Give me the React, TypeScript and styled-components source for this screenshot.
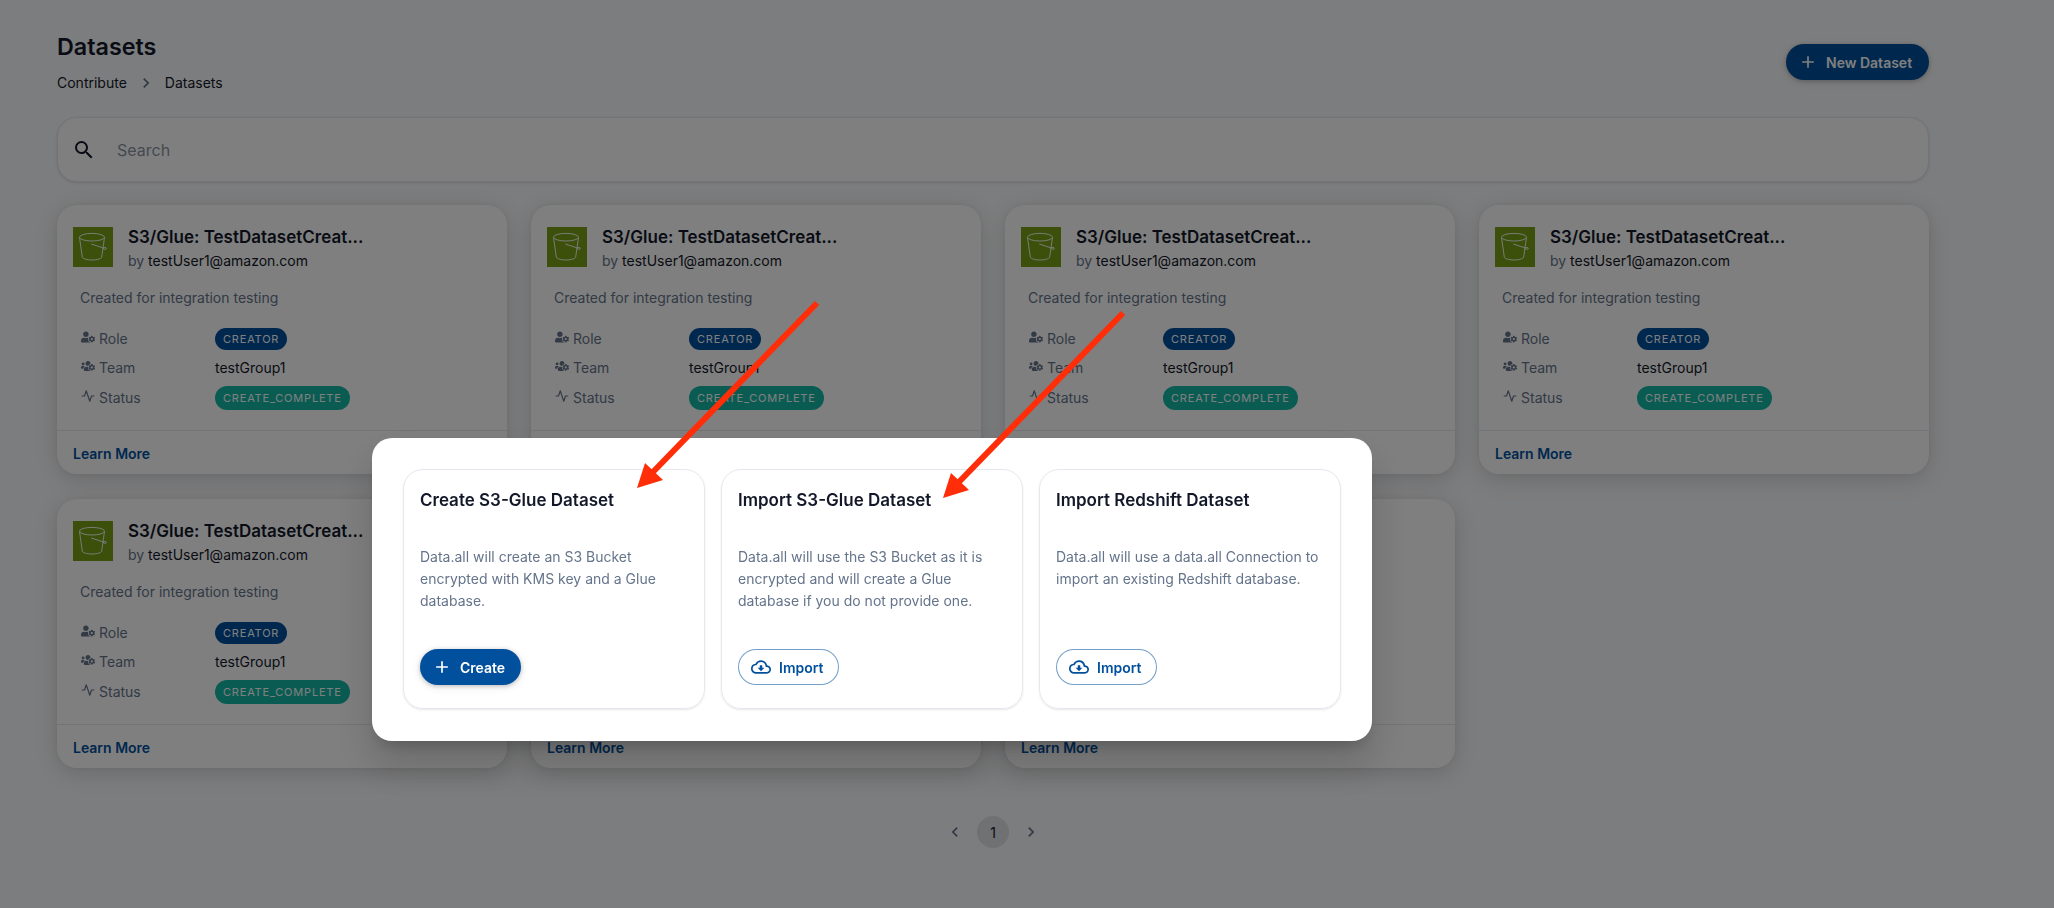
import * as React from "react";
import styled, { createGlobalStyle } from "styled-components";
import { FaUserCog, FaUsersCog } from "react-icons/fa";
import { FiActivity } from "react-icons/fi";
import {
  MdAdd,
  MdChevronLeft,
  MdChevronRight,
  MdOutlineCloudDownload,
  MdSearch,
} from "react-icons/md";

const GlobalStyle = createGlobalStyle`
  html, body {
    margin: 0;
    padding: 0;
    height: 100%;
    overflow: hidden;
    background: #f9fafc;
    color: #121828;
    font-family: Inter, "Noto Sans", sans-serif;
  }
  * {
    box-sizing: border-box;
  }
`;

const Page = styled.main`
  width: 1929px;
  padding: 30px 0 0 57px;
`;

const HeaderRow = styled.header`
  display: flex;
  justify-content: space-between;
  align-items: flex-start;
`;

const PageTitle = styled.h1`
  margin: 0;
  font-size: 23.3px;
  line-height: 33px;
  font-weight: 600;
`;

const Breadcrumbs = styled.nav`
  display: flex;
  align-items: center;
  gap: 9px;
  margin-top: 9px;
  font-size: 14px;
  line-height: 22px;
  svg {
    color: #65748b;
    font-size: 20px;
  }
`;

const Button = styled.button<{ $outlined?: boolean }>`
  display: inline-flex;
  align-items: center;
  gap: 8px;
  height: 36px;
  padding: 0 16px 0 12px;
  border-radius: 18px;
  font-family: inherit;
  font-size: 14px;
  font-weight: 600;
  color: ${(p) => (p.$outlined ? "#00509e" : "#fff")};
  background: ${(p) => (p.$outlined ? "#fff" : "#00509e")};
  border: ${(p) => (p.$outlined ? "1px solid rgba(0, 80, 158, 0.55)" : "none")};
  box-shadow: ${(p) => (p.$outlined ? "none" : "0 1px 4px rgba(0, 0, 0, 0.2), 0 2px 8px rgba(0, 0, 0, 0.1)")};
  svg {
    font-size: 20px;
    flex: none;
  }
`;

const NewDatasetButton = styled(Button)`
  margin-top: 14px;
  width: 143px;
`;

const SearchBar = styled.div`
  display: flex;
  align-items: center;
  gap: 21px;
  height: 65px;
  margin-top: 23px;
  padding-left: 14px;
  background: #fff;
  border: 1px solid #e6e8f0;
  border-radius: 20px;
  box-shadow: 0 1px 3px rgba(0, 0, 0, 0.12);
  color: #8a93a3;
  font-size: 16px;
  svg {
    color: #121828;
    font-size: 24px;
  }
`;

const CardGrid = styled.section`
  display: grid;
  grid-template-columns: repeat(4, 450px);
  gap: 25px 24px;
  margin-top: 23px;
`;

const DatasetCard = styled.article`
  display: flex;
  flex-direction: column;
  height: 269px;
  background: #fff;
  border-radius: 20px;
  box-shadow: 0 0 5px rgba(0, 0, 0, 0.05), 0 5px 22px rgba(0, 0, 0, 0.15);
`;

const CardHead = styled.div`
  display: flex;
  gap: 15px;
  padding: 21px 16px 0;
`;

const BucketBox = styled.div`
  width: 40px;
  height: 40px;
  margin-top: 1px;
  flex: none;
  background: #7aa116;
  svg {
    display: block;
  }
`;

const CardName = styled.div`
  font-size: 17px;
  line-height: 22px;
  font-weight: 600;
`;

const CardOwner = styled.div`
  margin-top: 2px;
  font-size: 14px;
  line-height: 22px;
  color: #65748b;
  span {
    color: #121828;
  }
`;

const CardDescription = styled.p`
  margin: 15px 0 0;
  padding-left: 23px;
  font-size: 14px;
  line-height: 22px;
  color: #65748b;
`;

const InfoList = styled.div`
  display: grid;
  grid-template-columns: 134px 1fr;
  row-gap: 7px;
  align-items: center;
  margin-top: 18px;
  padding-left: 24px;
`;

const InfoLabel = styled.div`
  display: flex;
  align-items: center;
  gap: 4px;
  font-size: 14px;
  line-height: 22px;
  color: #65748b;
  svg {
    font-size: 14px;
    flex: none;
    margin-top: -4px;
  }
`;

const InfoText = styled.div`
  font-size: 14px;
  line-height: 22px;
  color: #121828;
`;

const Chip = styled.span<{ $tone: "primary" | "success" }>`
  display: inline-flex;
  align-items: center;
  height: ${(p) => (p.$tone === "primary" ? "22px" : "24px")};
  padding: 0 8px;
  border-radius: 12px;
  font-size: 11px;
  font-weight: 400;
  letter-spacing: 0.8px;
  color: #fff;
  background: ${(p) => (p.$tone === "primary" ? "#00509e" : "#14b8a6")};
`;

const CardFooter = styled.div`
  margin-top: auto;
  height: 44px;
  padding: 13px 16px 0;
  border-top: 1px solid #e6e8f0;
  font-size: 14px;
  line-height: 20px;
  font-weight: 600;
  color: #00509e;
`;

const Pagination = styled.nav`
  display: flex;
  justify-content: center;
  gap: 6px;
  margin-top: 48px;
`;

const PageItem = styled.div<{ $current?: boolean }>`
  display: flex;
  align-items: center;
  justify-content: center;
  width: 32px;
  height: 32px;
  border-radius: 50%;
  font-size: 14px;
  color: ${(p) => (p.$current ? "#121828" : "#65748b")};
  background: ${(p) => (p.$current ? "rgba(18, 24, 40, 0.1)" : "transparent")};
  svg {
    font-size: 20px;
  }
`;

const Backdrop = styled.div`
  position: fixed;
  inset: 0;
  padding: 438px 0 0 372px;
  background: rgba(0, 0, 0, 0.5);
`;

const Dialog = styled.div`
  display: grid;
  grid-template-columns: repeat(3, 1fr);
  gap: 16px;
  width: 1000px;
  height: 303px;
  padding: 31px 31px 32px;
  background: #fff;
  border-radius: 20px;
  box-shadow: 0 11px 15px -7px rgba(0, 0, 0, 0.2), 0 24px 38px 3px rgba(0, 0, 0, 0.14);
`;

const OptionCard = styled.div`
  display: flex;
  flex-direction: column;
  align-items: flex-start;
  padding: 19px 16px 23px;
  border: 1px solid #e6e8f0;
  border-radius: 20px;
  box-shadow: 0 1px 2px rgba(0, 0, 0, 0.1);
`;

const OptionTitle = styled.h2`
  margin: 0;
  font-size: 17px;
  line-height: 22px;
  font-weight: 600;
`;

const OptionText = styled.p`
  margin: 35px 0 0;
  font-size: 14px;
  line-height: 22px;
  color: #65748b;
`;

const OptionAction = styled.div`
  margin-top: auto;
`;

const ActionButton = styled(Button)`
  width: 101px;
`;

const ArrowLayer = styled.svg`
  position: fixed;
  left: 0;
  top: 0;
  pointer-events: none;
`;

const BucketIcon = () => (
  <svg width="40" height="40" viewBox="0 0 40 40" fill="none" stroke="#fff" strokeWidth="0.9">
    <ellipse cx="19" cy="10.2" rx="12.5" ry="3.8" />
    <path d="M6.5 10.5 9.300 30c.3 1.700 4.500 3 9.700 3s9.400-1.300 9.700-3l2.800-19.500" />
    <path d="M18.300 17 31 21.200" />
    <ellipse cx="31.800" cy="21.400" rx="1.600" ry="0.900" />
  </svg>
);

const datasets = ["a", "b", "c", "d", "e", "f", "g"];

const options = [
  {
    title: "Create S3-Glue Dataset",
    text: "Data.all will create an S3 Bucket encrypted with KMS key and a Glue database.",
    action: "Create",
  },
  {
    title: "Import S3-Glue Dataset",
    text: "Data.all will use the S3 Bucket as it is encrypted and will create a Glue database if you do not provide one.",
    action: "Import",
  },
  {
    title: "Import Redshift Dataset",
    text: "Data.all will use a data.all Connection to import an existing Redshift database.",
    action: "Import",
  },
];

const App = () => {
  return (
    <>
      <GlobalStyle />
      <Page>
        <HeaderRow>
          <div>
            <PageTitle>Datasets</PageTitle>
            <Breadcrumbs>
              Contribute
              <MdChevronRight />
              Datasets
            </Breadcrumbs>
          </div>
          <NewDatasetButton>
            <MdAdd />
            New Dataset
          </NewDatasetButton>
        </HeaderRow>
        <SearchBar>
          <MdSearch />
          Search
        </SearchBar>
        <CardGrid>
          {datasets.map((id) => (
            <DatasetCard key={id}>
              <CardHead>
                <BucketBox>
                  <BucketIcon />
                </BucketBox>
                <div>
                  <CardName>S3/Glue: TestDatasetCreat...</CardName>
                  <CardOwner>
                    by <span>testUser1@amazon.com</span>
                  </CardOwner>
                </div>
              </CardHead>
              <CardDescription>Created for integration testing</CardDescription>
              <InfoList>
                <InfoLabel>
                  <FaUserCog />
                  Role
                </InfoLabel>
                <div>
                  <Chip $tone="primary">CREATOR</Chip>
                </div>
                <InfoLabel>
                  <FaUsersCog />
                  Team
                </InfoLabel>
                <InfoText>testGroup1</InfoText>
                <InfoLabel>
                  <FiActivity />
                  Status
                </InfoLabel>
                <div>
                  <Chip $tone="success">CREATE_COMPLETE</Chip>
                </div>
              </InfoList>
              <CardFooter>Learn More</CardFooter>
            </DatasetCard>
          ))}
        </CardGrid>
        <Pagination>
          <PageItem>
            <MdChevronLeft />
          </PageItem>
          <PageItem $current>1</PageItem>
          <PageItem>
            <MdChevronRight />
          </PageItem>
        </Pagination>
      </Page>
      <Backdrop>
        <Dialog>
          {options.map((option) => (
            <OptionCard key={option.title}>
              <OptionTitle>{option.title}</OptionTitle>
              <OptionText>{option.text}</OptionText>
              <OptionAction>
                {option.action === "Create" ? (
                  <ActionButton>
                    <MdAdd />
                    Create
                  </ActionButton>
                ) : (
                  <ActionButton $outlined>
                    <MdOutlineCloudDownload />
                    Import
                  </ActionButton>
                )}
              </OptionAction>
            </OptionCard>
          ))}
        </Dialog>
      </Backdrop>
      <ArrowLayer width="2054" height="908" viewBox="0 0 2054 908">
        <g fill="#ff2d08" stroke="#ff2d08">
          <line x1="817" y1="303" x2="652" y2="473" strokeWidth="6" />
          <polygon points="637,488 645,463 663,480" strokeWidth="0" />
          <line x1="1123" y1="313" x2="958" y2="483" strokeWidth="6" />
          <polygon points="943,498 951,473 969,490" strokeWidth="0" />
        </g>
      </ArrowLayer>
    </>
  );
};

export default App;
